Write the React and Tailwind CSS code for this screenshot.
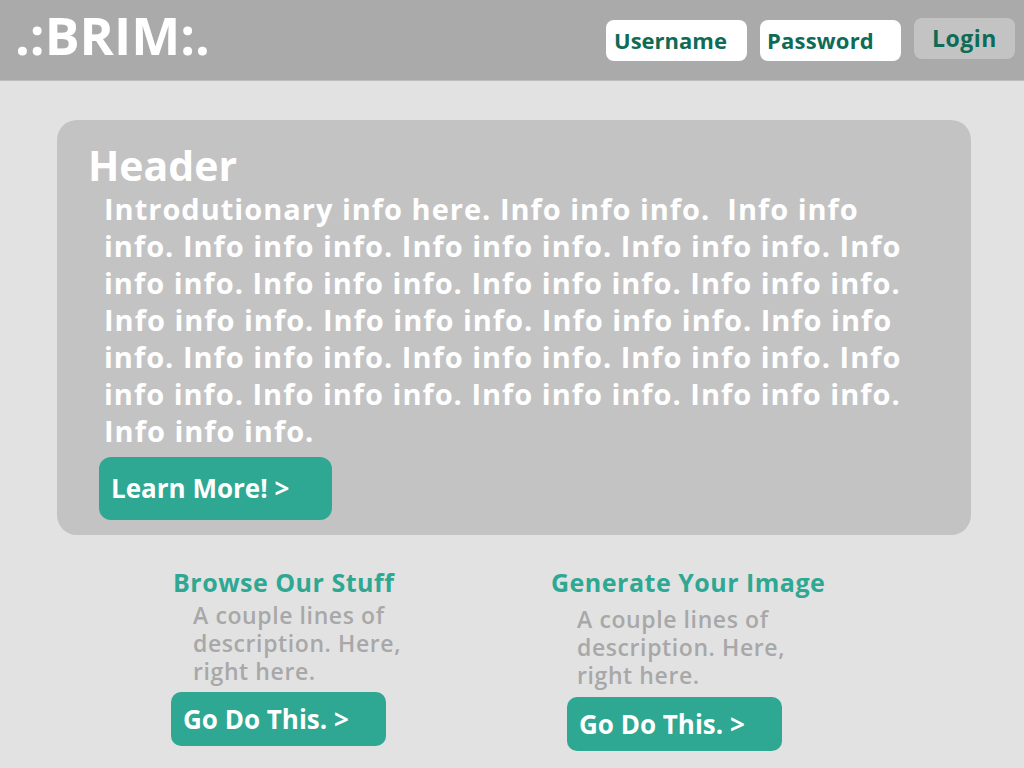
import React from "react";

export default function App() {
  const lines = [
    "Introdutionary info here. Info info info.  Info info",
    "info. Info info info. Info info info. Info info info. Info",
    "info info. Info info info. Info info info. Info info info.",
    "Info info info. Info info info. Info info info. Info info",
    "info. Info info info. Info info info. Info info info. Info",
    "info info. Info info info. Info info info. Info info info.",
    "Info info info.",
  ];
  return (
    <div className="w-[1024px] h-[768px] bg-[#e2e2e2] overflow-hidden font-['Open_Sans',sans-serif]">
      <header className="h-[81px] bg-[#aaaaaa] border-b border-[#bdbdbd] flex items-start justify-between">
        <div className="pl-[15px] pt-[2px] text-white text-[52px] font-bold leading-[66px]">.:BRIM:.</div>
        <div className="flex gap-[13px] pt-[20px] pr-[9px]">
          <div className="w-[141px] h-[41px] bg-white rounded-[8px] px-[8px] flex items-center text-[#0e6b56] text-[22px] font-bold">Username</div>
          <div className="w-[141px] h-[41px] bg-white rounded-[8px] px-[7px] flex items-center text-[#0e6b56] text-[22px] font-bold tracking-[0.2px]">Password</div>
          <div className="w-[101px] h-[41px] -mt-[2px] bg-[#c4c3c4] rounded-[8px] flex items-center justify-center text-[#0e6b56] text-[23px] font-bold tracking-[0.5px]">Login</div>
        </div>
      </header>
      <main className="px-[57px] pt-[39px]">
        <section className="w-[914px] h-[415px] bg-[#c4c3c4] rounded-[20px] pl-[31px] pt-[20px]">
          <h1 className="text-white text-[41px] font-bold leading-[50px]">Header</h1>
          <div className="pl-[16px] text-white text-[29px] font-bold leading-[37px] tracking-[1px] whitespace-pre">
            {lines.map((l, i) => (
              <div key={i}>{l}</div>
            ))}
          </div>
          <button className="mt-[8px] ml-[11px] w-[233px] h-[63px] bg-[#2ea893] rounded-[12px] text-white text-[26px] font-bold text-left pl-[12px]">
            Learn More! &gt;
          </button>
        </section>
        <div className="flex">
          <div className="ml-[114px] pt-[32px] w-[380px]">
            <h2 className="text-[#2ea893] text-[25px] font-bold leading-[30px] tracking-[0.5px] pl-[2px]">Browse Our Stuff</h2>
            <p className="pl-[22px] pt-[4px] text-[#a8a8a8] text-[23px] font-semibold leading-[28px] tracking-[0.6px] w-[260px]">A couple lines of description. Here, right here.</p>
            <button className="mt-[7px] w-[215px] h-[54px] bg-[#2ea893] rounded-[10px] text-white text-[26px] font-bold text-left pl-[12px]">
              Go Do This. &gt;
            </button>
          </div>
          <div className="pt-[32px] w-[320px]">
            <h2 className="text-[#2ea893] text-[25px] font-bold leading-[30px] tracking-[0.5px]">Generate Your Image</h2>
            <p className="pl-[26px] pt-[8px] text-[#a8a8a8] text-[23px] font-semibold leading-[28px] tracking-[0.6px] w-[260px]">A couple lines of description. Here, right here.</p>
            <button className="mt-[8px] ml-[16px] w-[215px] h-[54px] bg-[#2ea893] rounded-[10px] text-white text-[26px] font-bold text-left pl-[12px]">
              Go Do This. &gt;
            </button>
          </div>
        </div>
      </main>
    </div>
  );
}
